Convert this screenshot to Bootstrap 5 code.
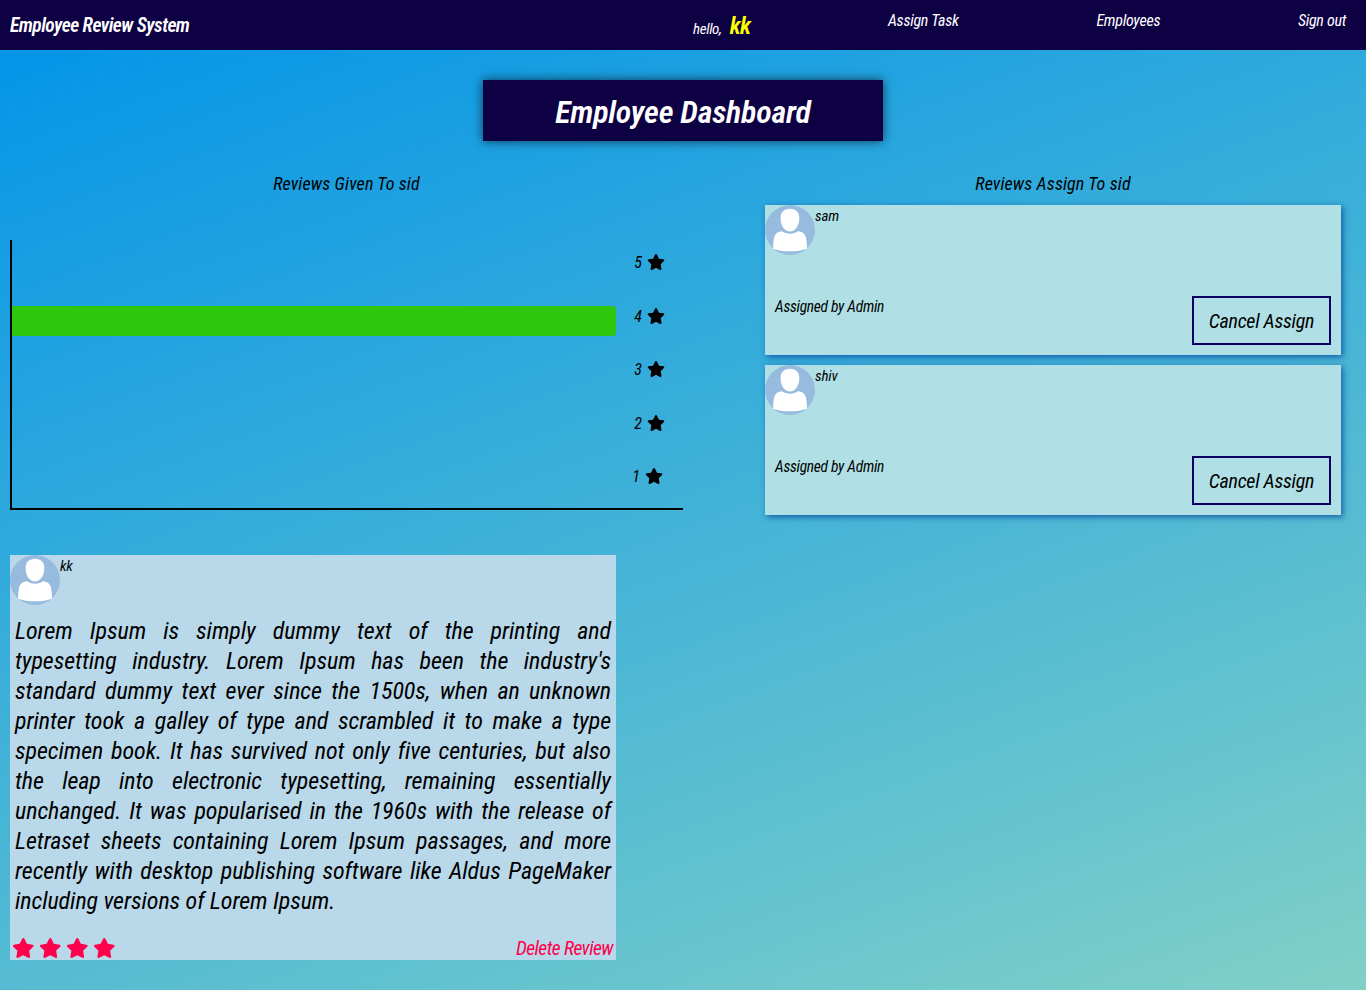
<!DOCTYPE html>
<html lang="en">
<head>
<meta charset="utf-8">
<meta name="viewport" content="width=device-width, initial-scale=1">
<title>Employee Review System</title>
<link href="https://cdn.jsdelivr.net/npm/bootstrap@5.3.0/dist/css/bootstrap.min.css" rel="stylesheet">
<style>
body{min-height:990px;background:linear-gradient(160deg,#0093e9 0%,#80d0c7 100%) no-repeat;color:#000;font-family:"Roboto Condensed","Open Sans Condensed",Lato,sans-serif;font-style:italic;font-size:16px;line-height:20px}
a{color:inherit;text-decoration:none}
.topbar{height:50px;background:#0d0043;color:#fff;padding:0 20px 0 10px}
.brand{font-size:19.5px;font-weight:600;letter-spacing:-.53px;line-height:52px}
.menu{width:653px;font-weight:400;letter-spacing:-.28px;padding-top:11px}
.hello{font-size:15px;letter-spacing:-.35px;line-height:30px}
.hello b{font-size:24px;font-weight:600;color:#ff0;letter-spacing:-.7px;margin-left:5px}
.page-title{width:400px;height:61px;margin:30px auto 0;background:#0d0043;color:#fff;font-size:32px;font-weight:600;letter-spacing:-.2px;line-height:64px;box-shadow:0 0 10px rgba(0,0,0,.65)}
.given{width:673px;margin-left:10px}
.assigned{width:576px;margin-right:25px}
.heading{font-size:18px;font-weight:400;letter-spacing:.12px;line-height:24px;margin:31px 0 9px}
.chart{height:270px;margin-top:44px;border-left:2px solid #000;border-bottom:2px solid #000}
.bar-area{width:604px}
.chart-row{flex:1 1 0}
.bar{height:30px;margin-top:12px;background:#2fc60e;border-radius:0 4px 4px 0}
.scale{width:67px}
.scale .chart-row{padding-top:13px;gap:5px}
.scale .star{margin-top:1px}
.star{width:18px;height:16px;fill:currentColor}
.avatar{width:50px;height:50px;flex:none}
.person{font-size:15px;letter-spacing:-.2px;line-height:23px}
.task{height:150px;margin-bottom:10px;background:#b0e0e6;box-shadow:2px 2px 6px rgba(0,64,155,.75)}
.task-foot{padding:0 10px;height:59px}
.by{font-size:15.5px;letter-spacing:-.28px;padding-top:1px}
.cancel{width:139px;height:49px;border:2px solid #0d0063;border-radius:0;font-size:20px;font-weight:400;font-style:italic;letter-spacing:-.28px;color:#000;padding:0;line-height:46px}
.review{width:606px;height:405px;margin-top:45px;background:#b9d8ea}
.quote{margin:11px 5px 0;font-size:24px;font-weight:400;letter-spacing:-.07px;line-height:30px}
.quote span{display:block;white-space:nowrap;text-align:justify;text-align-last:justify}
.quote span:last-child{text-align-last:left}
.rating{color:#ff004c;margin-left:1.500px;gap:4.5px;padding-bottom:2px}
.rating .star{width:22.5px;height:20px}
.delete{color:#ff004c;font-size:19.5px;letter-spacing:-.55px;line-height:23px;margin-right:3px}
</style>
</head>
<body>
<svg class="d-none" xmlns="http://www.w3.org/2000/svg">
<symbol id="star" viewBox="0 0 576 512"><path d="M381.2 150.3L524.9 171.5C536.8 173.2 546.8 181.6 550.6 193.1C554.4 204.7 551.3 217.3 542.7 225.9L438.5 328.1L463.1 474.7C465.1 486.7 460.2 498.9 450.2 506C440.3 513.1 427.2 514 416.5 508.3L288.1 439.8L159.8 508.3C149 514 135.9 513.1 126 506C116.1 498.9 111.1 486.7 113.2 474.7L137.8 328.1L33.58 225.9C24.97 217.3 21.91 204.7 25.69 193.1C29.46 181.6 39.43 173.2 51.42 171.5L195 150.3L259.4 17.97C264.7 6.995 275.8 0 288.1 0C300.4 0 311.5 6.995 316.9 17.97z"/></symbol>
<symbol id="user" viewBox="0 0 50 50"><circle cx="25" cy="25" r="25" fill="#97bbdf"/><path fill="#fff" d="M25 3.8C31 3.8 34.3 7.3 34.3 13C34.3 21 30.3 26.5 25 26.5S15.600 21 15.600 13C15.600 7.300 19 3.800 25 3.800zM17 26.200C21 29.500 29 29.500 33 26.200C38 27 40 28.500 41 33C41.800 36.500 42 40 42 43.800C33 47.200 17 47.200 8 43.800C8 40 8.300 36.500 9 33C10 28.500 12 27 17 26.200z"/></symbol>
</svg>
<nav class="topbar d-flex justify-content-between">
<a href="#" class="brand">Employee Review System</a>
<div class="menu d-flex justify-content-between"><span class="hello">hello, <b>kk</b></span><a href="#">Assign Task</a><a href="#">Employees</a><a href="#">Sign out</a></div>
</nav>
<h1 class="page-title text-center">Employee Dashboard</h1>
<main class="d-flex justify-content-between align-items-start">
<section class="given">
<h2 class="heading text-center">Reviews Given To sid</h2>
<div class="chart d-flex">
<div class="bar-area d-flex flex-column"><div class="chart-row"></div><div class="chart-row"><div class="bar" style="width:100%"></div></div><div class="chart-row"></div><div class="chart-row"></div><div class="chart-row"></div></div>
<div class="scale d-flex flex-column">
<div class="chart-row d-flex justify-content-center"><span>5</span><svg class="star"><use href="#star"/></svg></div>
<div class="chart-row d-flex justify-content-center"><span>4</span><svg class="star"><use href="#star"/></svg></div>
<div class="chart-row d-flex justify-content-center"><span>3</span><svg class="star"><use href="#star"/></svg></div>
<div class="chart-row d-flex justify-content-center"><span>2</span><svg class="star"><use href="#star"/></svg></div>
<div class="chart-row d-flex justify-content-center pe-1"><span>1</span><svg class="star"><use href="#star"/></svg></div>
</div>
</div>
<article class="review d-flex flex-column">
<div class="d-flex"><svg class="avatar"><use href="#user"/></svg><span class="person">kk</span></div>
<p class="quote"><span>Lorem Ipsum is simply dummy text of the printing and</span> <span>typesetting industry. Lorem Ipsum has been the industry's</span> <span>standard dummy text ever since the 1500s, when an unknown</span> <span>printer took a galley of type and scrambled it to make a type</span> <span>specimen book. It has survived not only five centuries, but also</span> <span>the leap into electronic typesetting, remaining essentially</span> <span>unchanged. It was popularised in the 1960s with the release of</span> <span>Letraset sheets containing Lorem Ipsum passages, and more</span> <span>recently with desktop publishing software like Aldus PageMaker</span> <span>including versions of Lorem Ipsum.</span></p>
<div class="d-flex justify-content-between align-items-end mt-auto">
<div class="rating d-flex"><svg class="star"><use href="#star"/></svg><svg class="star"><use href="#star"/></svg><svg class="star"><use href="#star"/></svg><svg class="star"><use href="#star"/></svg></div>
<a href="#" class="delete">Delete Review</a>
</div>
</article>
</section>
<section class="assigned">
<h2 class="heading text-center">Reviews Assign To sid</h2>
<article class="task d-flex flex-column justify-content-between">
<div class="d-flex"><svg class="avatar"><use href="#user"/></svg><span class="person">sam</span></div>
<div class="task-foot d-flex justify-content-between align-items-start"><span class="by">Assigned by Admin</span><button class="btn cancel">Cancel Assign</button></div>
</article>
<article class="task d-flex flex-column justify-content-between">
<div class="d-flex"><svg class="avatar"><use href="#user"/></svg><span class="person">shiv</span></div>
<div class="task-foot d-flex justify-content-between align-items-start"><span class="by">Assigned by Admin</span><button class="btn cancel">Cancel Assign</button></div>
</article>
</section>
</main>
<script src="https://cdn.jsdelivr.net/npm/bootstrap@5.3.0/dist/js/bootstrap.bundle.min.js"></script>
</body>
</html>
